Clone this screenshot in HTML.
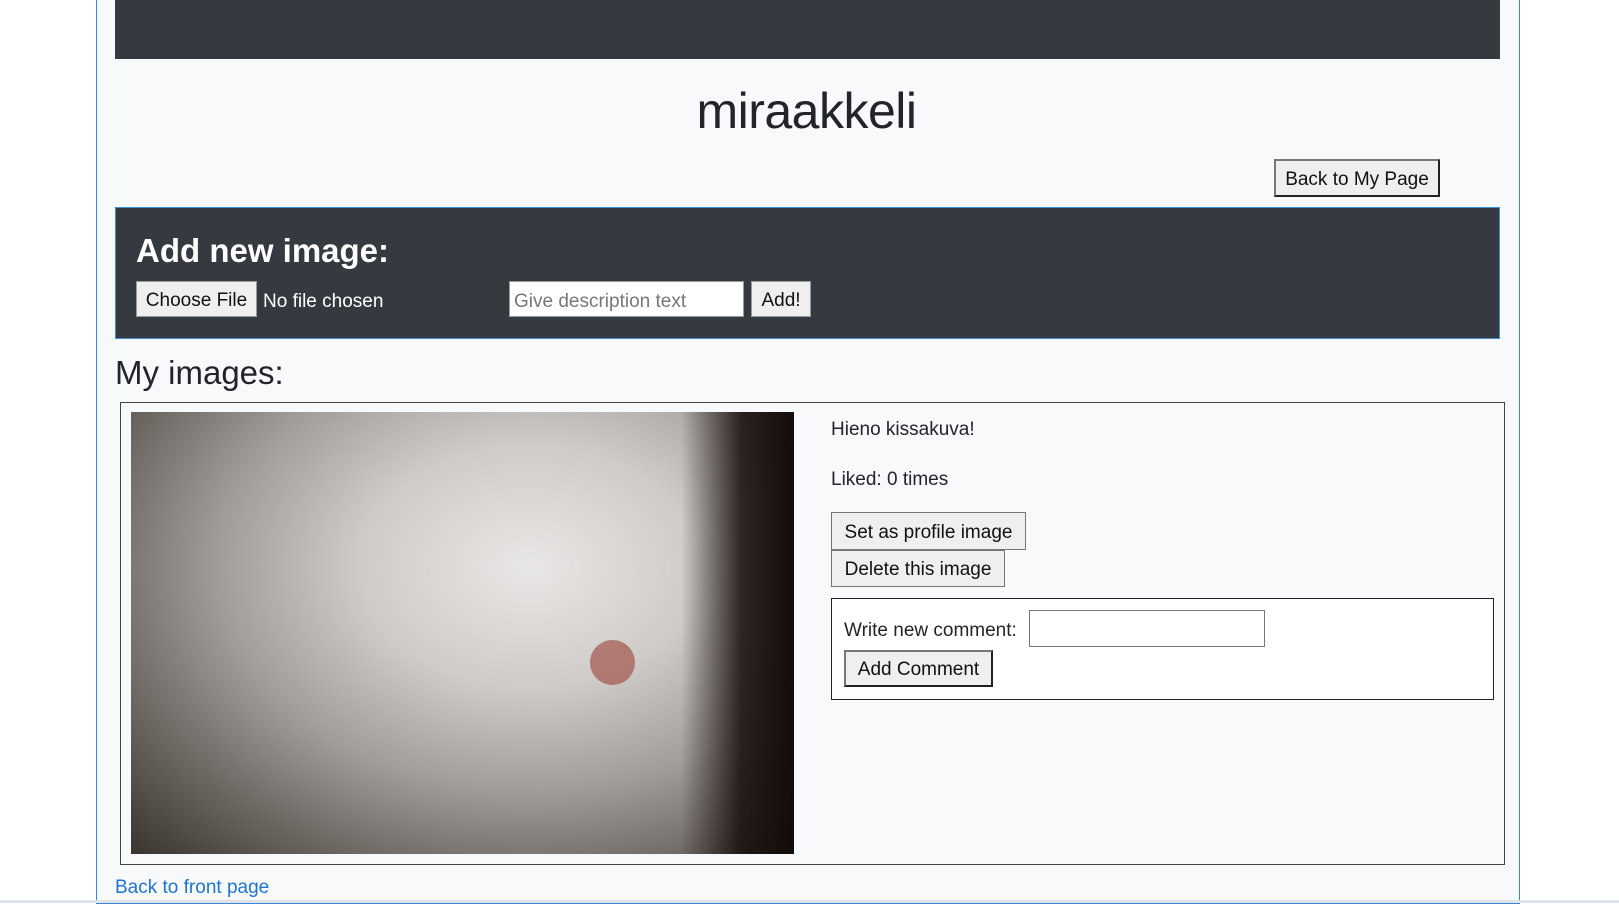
<!DOCTYPE html>
<html><head><meta charset="utf-8"><style>
*{box-sizing:border-box}
body{margin:0;width:1619px;height:903px;background:#fff;font-family:"Liberation Sans",sans-serif;color:#212529;position:relative;overflow:hidden}
.abs{position:absolute}
.cont{left:96px;top:-2px;width:1424px;height:906px;background:#f8f9fa;border:1px solid #3b86d6;border-top:none}
.btn{position:absolute;background:#efefef;border:1px solid #767676;font-size:19px;color:#111;display:flex;align-items:center;justify-content:center;white-space:nowrap;padding-top:3px}
.t{position:absolute;white-space:nowrap}
</style></head><body>
<div class="abs cont"></div>
<div class="abs" style="left:115px;top:0;width:1385px;height:59px;background:#343a40"></div>
<div class="t" style="left:0;width:1613px;text-align:center;top:82px;font-size:50px;font-weight:500;letter-spacing:-0.5px">miraakkeli</div>
<div class="btn" style="left:1274px;top:159px;width:166px;height:38px;border:2px solid #222;border-top-color:#777;border-left-color:#777">Back to My Page</div>
<div class="abs" style="left:115px;top:207px;width:1385px;height:132px;background:#343a40;border:1px solid #3b8fd9"></div>
<div class="t" style="left:136px;top:232px;font-size:33px;font-weight:bold;color:#fff">Add new image:</div>
<div class="btn" style="left:136px;top:281px;width:121px;height:36px;border-color:#999">Choose File</div>
<div class="t" style="left:263px;top:291px;font-size:19px;color:#fff">No file chosen</div>
<div class="abs" style="left:509px;top:281px;width:235px;height:36px;background:#fff;border:1px solid #999"></div>
<div class="t" style="left:514px;top:291px;font-size:19px;color:#777">Give description text</div>
<div class="btn" style="left:751px;top:281px;width:60px;height:36px;border-color:#999">Add!</div>
<div class="t" style="left:115px;top:354px;font-size:33px;font-weight:500">My images:</div>
<div class="abs" style="left:120px;top:402px;width:1385px;height:463px;border:1px solid #444"></div>
<div class="abs" style="left:131px;top:412px;width:663px;height:442px;background:linear-gradient(90deg,rgba(0,0,0,0) 0%,rgba(0,0,0,0) 83%,rgba(20,12,8,.85) 92%,#120c0a 100%),radial-gradient(ellipse at 60% 35%,#e9e7e5 0%,#cfcbc8 30%,#a29d99 55%,#6b6560 78%,#3a342f 100%)"></div>
<div class="abs" style="left:590px;top:640px;width:45px;height:45px;border-radius:50%;background:#a8645c;opacity:.8"></div>
<div class="t" style="left:831px;top:419px;font-size:19px">Hieno kissakuva!</div>
<div class="t" style="left:831px;top:469px;font-size:19px">Liked: 0 times</div>
<div class="btn" style="left:831px;top:512px;width:195px;height:38px">Set as profile image</div>
<div class="btn" style="left:831px;top:550px;width:174px;height:37px">Delete this image</div>
<div class="abs" style="left:831px;top:598px;width:663px;height:102px;background:#fff;border:1px solid #222"></div>
<div class="t" style="left:844px;top:620px;font-size:19px">Write new comment:</div>
<div class="abs" style="left:1029px;top:610px;width:236px;height:37px;background:#fff;border:1px solid #777"></div>
<div class="btn" style="left:844px;top:650px;width:149px;height:37px;border:2px solid #222;border-top-color:#777;border-left-color:#777">Add Comment</div>
<div class="t" style="left:115px;top:877px;font-size:19px;color:#1f74d0">Back to front page</div>
<div class="abs" style="left:0;top:900px;width:1619px;height:3px;background:#dde3e8"></div>
</body></html>
